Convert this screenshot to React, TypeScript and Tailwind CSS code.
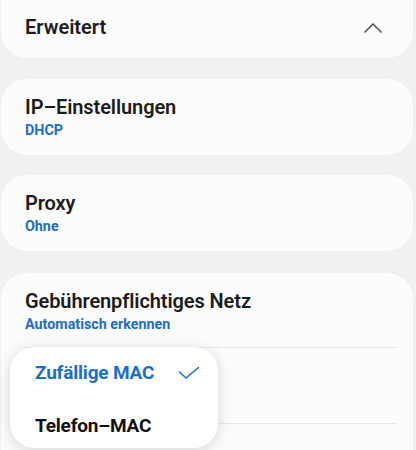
import React from "react";

const font = { fontFamily: "Roboto, 'Noto Sans', sans-serif" };

function Card({ title, sub, className = "" }: { title: string; sub: string; className?: string }) {
  return (
    <div className={`bg-[#fcfcfc] rounded-[26px] ml-[1px] mr-[3px] pl-[24px] pt-[15px] pb-[16px] ${className}`}>
      <div className="text-[20px] leading-[26px] font-semibold text-[#1c1c1c] tracking-[-0.1px]">{title}</div>
      <div className="text-[14.3px] leading-[18px] font-bold text-[#1b6fc7] mt-[1px]">{sub}</div>
    </div>
  );
}

export default function App() {
  return (
    <div className="relative w-[416px] h-[450px] overflow-hidden bg-[#f1f1f1]" style={font}>
      <div className="flex flex-col">
        <div className="bg-[#fcfcfc] rounded-b-[26px] ml-[1px] mr-[3px] h-[58px] pl-[24px] pr-[30px] pt-[14px] flex items-start justify-between">
          <div className="text-[20px] leading-[26px] font-semibold text-[#1c1c1c]">Erweitert</div>
          <svg width="20" height="12" viewBox="0 0 20 12" className="mt-[8px]">
            <path d="M2 10 L10 2 L18 10" fill="none" stroke="#5a5a5a" strokeWidth="1.7" strokeLinecap="round" strokeLinejoin="round" />
          </svg>
        </div>
        <Card title="IP–Einstellungen" sub="DHCP" className="mt-[21px]" />
        <Card title="Proxy" sub="Ohne" className="mt-[20px]" />
        <div className="bg-[#fcfcfc] rounded-t-[26px] ml-[1px] mr-[3px] mt-[22px] h-[200px] pt-[15px]">
          <div className="pl-[24px]">
            <div className="text-[20px] leading-[26px] font-semibold text-[#1c1c1c] tracking-[-0.1px]">Gebührenpflichtiges Netz</div>
            <div className="text-[14.3px] leading-[18px] font-bold text-[#1b6fc7] mt-[1px]">Automatisch erkennen</div>
          </div>
          <div className="ml-[24px] mr-[16px] mt-[14px] border-t border-[#e6e6e6]" />
          <div className="h-[75px]" />
          <div className="ml-[24px] mr-[16px] border-t border-[#e6e6e6]" />
        </div>
      </div>

      <div className="absolute left-[10px] top-[347px] w-[208px] h-[101px] bg-white rounded-[24px] shadow-[0_2px_14px_rgba(0,0,0,0.16)] flex flex-col pl-[25px] pr-[18px]">
        <div className="h-[52px] flex items-center justify-between">
          <span className="text-[19px] font-bold text-[#1b6fc7] tracking-[-0.2px]">Zufällige MAC</span>
          <svg width="22" height="14" viewBox="0 0 22 14">
            <path d="M1.5 6 L8 12 L20.5 1.5" fill="none" stroke="#1b6fc7" strokeWidth="1.6" strokeLinecap="round" strokeLinejoin="round" />
          </svg>
        </div>
        <div className="h-[49px] flex items-center pt-[6px]">
          <span className="text-[19px] font-bold text-[#111111] tracking-[-0.2px]">Telefon–MAC</span>
        </div>
      </div>
    </div>
  );
}
